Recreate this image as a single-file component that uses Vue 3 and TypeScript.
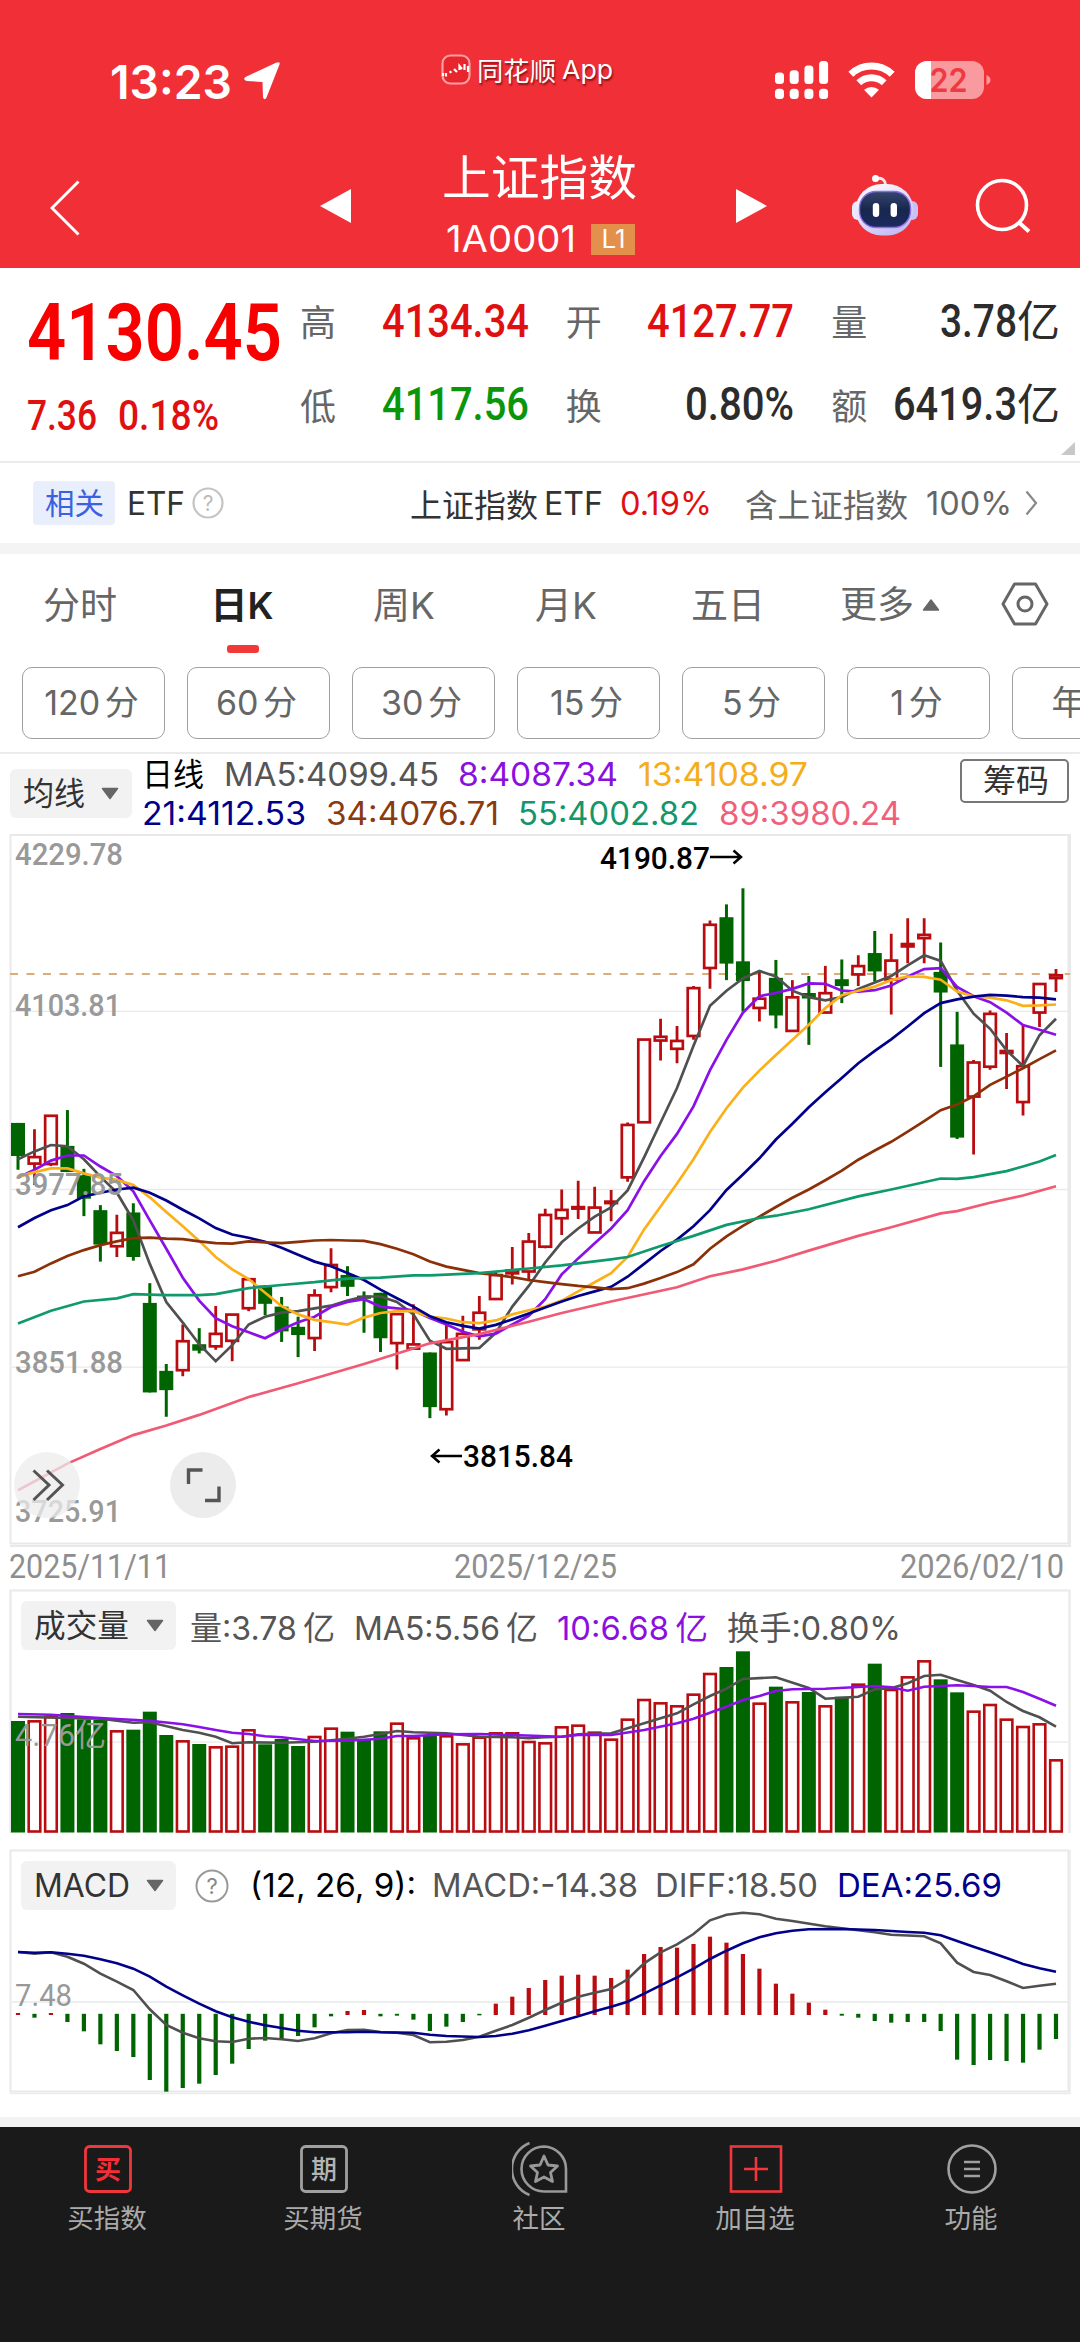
<script setup lang="ts">
import type { Directive } from 'vue'

type Pt = [number, number]
type Candle = [kind: 'r' | 'g', high: number, top: number, bottom: number, low: number]

/* Squeezes or stretches a text run so that it takes exactly the given width. */
const vFit: Directive<HTMLElement, number> = {
  mounted(el, { value }) {
    el.style.display = 'inline-block'
    el.style.whiteSpace = 'nowrap'
    const natural = el.getBoundingClientRect().width
    el.style.width = `${value}px`
    el.style.transformOrigin = '0 50%'
    el.style.transform = `scaleX(${value / natural})`
  },
}

const px = (i: number) => 18 + i * 16.476
const ky = (v: number) => 830 + v / 2.178
const vy = (v: number) => 1540 + v / 3
const my = (v: number) => 1840 + v / 3

const path = (pts: Pt[], fy: (v: number) => number) =>
  pts.map(([i, v]) => `${px(i).toFixed(1)},${fy(v).toFixed(1)}`).join(' ')
const full = (values: number[]): Pt[] => values.map((v, i) => [i, v])

const candles: Candle[] = [
  ['g', 638, 638, 710, 740], ['r', 652, 712, 727, 773], ['r', 622, 622, 728, 732], ['g', 610, 688, 745, 745],
  ['g', 738, 752, 803, 841], ['g', 817, 828, 903, 940], ['r', 838, 877, 907, 930], ['g', 813, 833, 930, 938],
  ['g', 987, 1030, 1225, 1225], ['g', 1163, 1178, 1220, 1278], ['r', 1077, 1113, 1177, 1190], ['g', 1085, 1120, 1134, 1140],
  ['r', 1037, 1097, 1125, 1132], ['r', 1055, 1055, 1113, 1157], ['r', 978, 978, 1042, 1048], ['g', 992, 992, 1032, 1057],
  ['g', 1017, 1038, 1092, 1115], ['g', 1060, 1082, 1100, 1148], ['r', 1000, 1013, 1107, 1135], ['r', 911, 947, 996, 1007],
  ['g', 950, 969, 995, 1015], ['g', 1005, 1014, 1021, 1095], ['g', 1008, 1008, 1107, 1137], ['r', 1052, 1054, 1118, 1175],
  ['r', 1033, 1120, 1130, 1132], ['g', 1138, 1138, 1257, 1281], ['r', 1077, 1115, 1262, 1275], ['r', 1058, 1097, 1155, 1155],
  ['r', 1015, 1051, 1088, 1110], ['r', 962, 969, 1022, 1022], ['r', 908, 959, 966, 990], ['r', 878, 896, 962, 983],
  ['r', 825, 838, 908, 911], ['r', 783, 827, 846, 882], ['r', 764, 821, 825, 847], ['r', 777, 822, 877, 877],
  ['r', 784, 809, 813, 852], ['r', 637, 642, 757, 766], ['r', 456, 456, 637, 637], ['r', 411, 450, 459, 502],
  ['r', 427, 459, 477, 508], ['r', 340, 344, 449, 457], ['r', 197, 206, 301, 346], ['g', 162, 190, 291, 327],
  ['g', 127, 286, 329, 395], ['r', 307, 367, 388, 417], ['g', 283, 322, 404, 432], ['r', 327, 364, 438, 438],
  ['g', 318, 355, 367, 468], ['r', 296, 355, 398, 398], ['g', 282, 325, 340, 377], ['r', 273, 296, 315, 340],
  ['g', 220, 268, 308, 330], ['r', 226, 284, 326, 402], ['r', 192, 248, 254, 290], ['r', 192, 228, 236, 290],
  ['g', 245, 309, 354, 516], ['g', 396, 467, 670, 673], ['r', 501, 506, 581, 707], ['r', 393, 400, 516, 522],
  ['r', 442, 481, 486, 564], ['r', 425, 514, 593, 622], ['r', 335, 335, 398, 429], ['r', 303, 316, 323, 353],
]

const ma5 = full([717, 700, 686, 689, 717, 755, 790, 850, 945, 1028, 1073, 1120, 1157, 1122, 1077, 1060, 1051, 1048, 1042, 1036, 1025, 1016, 1016, 1028, 1055, 1112, 1130, 1129, 1128, 1095, 1038, 993, 942, 898, 868, 842, 822, 785, 713, 637, 562, 470, 383, 350, 323, 307, 319, 350, 364, 371, 364, 346, 332, 318, 295, 273, 285, 350, 400, 433, 480, 514, 447, 411])
const ma8 = full([757, 740, 720, 709, 709, 733, 754, 787, 850, 912, 975, 1025, 1063, 1081, 1094, 1107, 1088, 1072, 1060, 1039, 1028, 1022, 1038, 1042, 1046, 1063, 1077, 1093, 1103, 1097, 1077, 1058, 1022, 968, 933, 900, 868, 828, 765, 710, 662, 602, 523, 457, 398, 362, 355, 346, 334, 335, 350, 352, 349, 339, 319, 303, 301, 342, 362, 375, 398, 425, 435, 446])
const ma13 = full([755, 745, 737, 737, 748, 757, 762, 773, 800, 832, 863, 895, 930, 957, 978, 1008, 1037, 1055, 1067, 1072, 1077, 1062, 1052, 1048, 1048, 1060, 1064, 1072, 1074, 1068, 1055, 1046, 1038, 1025, 1005, 985, 965, 930, 870, 820, 770, 717, 658, 606, 561, 524, 490, 457, 424, 388, 360, 350, 341, 327, 319, 320, 326, 352, 362, 365, 371, 383, 382, 380])
const ma21 = full([865, 845, 828, 817, 798, 790, 783, 779, 790, 807, 827, 846, 867, 881, 888, 897, 910, 925, 940, 950, 965, 980, 1001, 1020, 1038, 1059, 1072, 1080, 1086, 1078, 1066, 1053, 1040, 1027, 1015, 1005, 995, 973, 945, 917, 892, 863, 828, 784, 750, 715, 674, 640, 604, 571, 540, 508, 481, 456, 428, 399, 377, 369, 363, 359, 361, 364, 365, 369])
const ma34 = full([972, 962, 944, 928, 915, 904, 896, 889, 888, 890, 891, 896, 900, 901, 896, 898, 900, 897, 894, 893, 894, 895, 902, 912, 924, 940, 951, 958, 965, 969, 974, 980, 985, 989, 993, 996, 1000, 998, 988, 976, 963, 946, 912, 885, 862, 842, 821, 801, 783, 763, 742, 718, 698, 679, 657, 634, 610, 598, 580, 555, 537, 519, 499, 480])
const ma55: Pt[] = [[0, 1075], [2, 1047], [4, 1027], [6, 1020], [7, 1011], [9, 1013], [11, 1013], [12, 1011], [14, 998], [16, 991], [18, 985], [20, 977], [22, 975], [24, 970], [25, 970], [28, 965], [31, 955], [33, 948], [36, 935], [37, 930], [39, 906], [41, 884], [43, 860], [45, 845], [46, 840], [48, 826], [51, 798], [53, 783], [56, 759], [57, 760], [58, 756], [60, 743], [61, 733], [62, 722], [63, 708]]
const ma89: Pt[] = [[0, 1438], [3, 1380], [5, 1348], [7, 1318], [9, 1297], [11, 1274], [14, 1235], [17, 1205], [21, 1163], [25, 1118], [28, 1098], [31, 1071], [33, 1052], [36, 1027], [40, 996], [42, 972], [44, 957], [46, 938], [48, 916], [51, 884], [53, 865], [56, 835], [57, 830], [59, 812], [61, 796], [63, 776]]

const kLines = [
  { color: '#505050', pts: ma5 },
  { color: '#8a10e8', pts: ma8 },
  { color: '#fbb01a', pts: ma13 },
  { color: '#00008b', pts: ma21 },
  { color: '#8b3008', pts: ma34 },
  { color: '#0f9a6e', pts: ma55 },
  { color: '#f05a74', pts: ma89 },
]

const volume = [543, 541, 528, 519, 538, 540, 571, 569, 515, 585, 601, 612, 619, 617, 568, 613, 597, 618, 588, 563, 575, 600, 574, 548, 592, 588, 586, 610, 590, 577, 577, 603, 607, 559, 554, 575, 596, 536, 477, 487, 496, 461, 399, 381, 334, 488, 440, 484, 456, 496, 470, 431, 371, 447, 409, 361, 418, 457, 512, 492, 536, 558, 550, 658]
const volMa5: Pt[] = [[0, 530], [3, 534], [5, 536], [7, 548], [8, 547], [10, 570], [11, 578], [12, 590], [13, 610], [14, 607], [16, 608], [18, 605], [20, 596], [21, 590], [22, 582], [23, 573], [24, 577], [26, 580], [28, 590], [30, 592], [31, 595], [32, 592], [33, 590], [34, 583], [36, 580], [38, 550], [40, 520], [41, 493], [42, 468], [43, 446], [44, 417], [46, 412], [48, 444], [49, 476], [51, 470], [52, 448], [53, 445], [54, 430], [55, 408], [56, 404], [57, 420], [58, 435], [59, 452], [60, 486], [61, 513], [62, 532], [63, 560]]
const volMa10: Pt[] = [[0, 522], [2, 524], [4, 531], [6, 537], [8, 542], [10, 553], [11, 561], [12, 570], [13, 578], [14, 582], [15, 589], [16, 592], [18, 603], [20, 602], [22, 596], [23, 588], [24, 588], [26, 583], [28, 582], [30, 585], [33, 590], [34, 585], [36, 585], [38, 570], [40, 550], [41, 536], [42, 518], [43, 500], [44, 480], [45, 468], [46, 453], [47, 448], [49, 446], [51, 441], [52, 438], [53, 442], [54, 452], [55, 440], [57, 436], [58, 438], [59, 441], [60, 441], [61, 456], [62, 476], [63, 497]]

const macd = [519, 533, 519, 546, 574, 613, 633, 651, 720, 755, 744, 731, 705, 671, 627, 602, 600, 588, 562, 529, 513, 510, 529, 527, 539, 573, 560, 546, 526, 491, 470, 444, 420, 407, 404, 407, 414, 389, 342, 321, 323, 312, 290, 308, 342, 386, 431, 461, 488, 509, 527, 533, 543, 548, 546, 546, 573, 659, 675, 660, 663, 668, 629, 597]
const diff: Pt[] = [[0, 336], [1, 341], [2, 337], [3, 350], [4, 371], [5, 401], [6, 425], [7, 450], [8, 508], [9, 555], [10, 578], [11, 595], [12, 604], [13, 606], [14, 596], [15, 594], [16, 598], [17, 603], [18, 595], [19, 580], [20, 570], [21, 569], [22, 576], [23, 578], [24, 585], [25, 607], [26, 605], [27, 600], [28, 590], [29, 572], [30, 555], [31, 533], [32, 510], [33, 488], [34, 470], [35, 458], [36, 447], [37, 418], [38, 370], [39, 337], [40, 313], [41, 282], [42, 241], [43, 224], [44, 218], [45, 223], [46, 236], [47, 243], [49, 259], [51, 271], [52, 277], [53, 284], [55, 289], [56, 310], [57, 368], [58, 396], [59, 405], [60, 424], [61, 444], [62, 437], [63, 431]]
const dea: Pt[] = [[0, 336], [1, 338], [2, 337], [3, 341], [4, 347], [5, 358], [6, 370], [7, 386], [8, 410], [9, 440], [10, 466], [11, 491], [12, 514], [13, 532], [14, 545], [15, 556], [16, 564], [17, 572], [18, 577], [20, 577], [21, 575], [22, 577], [24, 578], [25, 584], [26, 588], [28, 591], [29, 588], [30, 581], [31, 571], [32, 557], [33, 543], [34, 529], [35, 514], [36, 500], [37, 485], [38, 461], [39, 436], [40, 412], [41, 386], [42, 357], [43, 332], [44, 310], [45, 292], [46, 280], [47, 272], [48, 268], [50, 267], [52, 270], [54, 276], [55, 278], [56, 286], [57, 303], [58, 320], [59, 337], [60, 354], [61, 372], [62, 385], [63, 395]]

const priceLabels = [
  { text: '4229.78', y: 865, w: 108 },
  { text: '4103.81', y: 1016, w: 106 },
  { text: '3977.85', y: 1195, w: 108 },
  { text: '3851.88', y: 1373, w: 108 },
  { text: '3725.91', y: 1522, w: 106 },
]

const stats = [
  [
    { name: '高', value: '4134.34', tone: 'up', w: 147 },
    { name: '开', value: '4127.77', tone: 'up', w: 147 },
    { name: '量', value: '3.78', unit: '亿', tone: '', w: 77 },
  ],
  [
    { name: '低', value: '4117.56', tone: 'down', w: 147 },
    { name: '换', value: '0.80%', tone: '', w: 109 },
    { name: '额', value: '6419.3', unit: '亿', tone: '', w: 124 },
  ],
]

const tabs = ['分时', '日K', '周K', '月K', '五日']
const periods = ['120 分', '60 分', '30 分', '15 分', '5 分', '1 分', '年']
const signal = [[84, 72.6], [84, 70.3], [84, 65.5], [84, 61]]
</script>

<template>
  <div class="screen">
    <header class="top">
      <div class="status">
        <div class="clock">
          <span v-fit="122" class="time">13:23</span>
          <svg class="loc" width="38" height="38" viewBox="0 0 38 38"><path d="M36.500 2.500 L23.500 35.500 Q21.500 39 20 35.500 L19.500 20 L3.500 19 Q-.5 17.500 2.500 15 L33 .8 Q37.500 -1 36.500 2.500Z" fill="#fff" /></svg>
        </div>
        <div class="source">
          <svg width="30" height="31" viewBox="0 0 30 31">
            <rect x="1.500" y="1.500" width="27" height="28" rx="8" fill="#e8242c" stroke="#f9a0a2" stroke-width="2.200" />
            <path d="M2 19 V22 M5 19 V22.500 M9 17 L10 19 M13 15 L16 18 M18.500 16 V12 L21 15 M23.500 10 V16 M27 12 V18" stroke="#fff" stroke-width="2.200" fill="none" />
          </svg>
          <span v-fit="79">同花顺</span><span v-fit="51" class="app">App</span>
        </div>
        <div class="system">
          <svg width="220" height="42" viewBox="772 59 220 42">
            <g fill="#fff">
              <template v-for="(s, i) in signal" :key="i">
                <rect :x="775 + i * 14.7" :y="s[1]" width="9" :height="s[0] - s[1]" rx="3.500" />
                <rect :x="775 + i * 14.7" y="88.800" width="9" height="10.200" rx="3.500" />
              </template>
            </g>
            <g fill="none" stroke="#fff">
              <path d="M850.800 74.200 A30 30 0 0 1 892.200 74.200" stroke-width="7" />
              <path d="M858.800 82.800 A18.500 18.500 0 0 1 884.200 82.800" stroke-width="7" />
            </g>
            <path d="M871.500 97.500 L864 89.800 Q871.500 84 879 89.800Z" fill="#fff" />
            <rect x="915" y="61" width="69" height="38" rx="12" fill="#f99b9e" />
            <path d="M931 61 H927 A12 12 0 0 0 915 73 V87 A12 12 0 0 0 927 99 H931Z" fill="#fff" />
            <path d="M986.500 75 Q990.500 77 990.500 80 T986.500 85Z" fill="#f99b9e" />
            <text x="929.500" y="92" font-family="Inter" font-weight="600" font-size="32" textLength="38" lengthAdjust="spacingAndGlyphs" fill="#ee3a42">22</text>
          </svg>
        </div>
      </div>
      <div class="nav">
        <svg class="back" width="30" height="56" viewBox="0 0 30 56"><path d="M28.500 1.500 L2 28 L28.500 54.500" fill="none" stroke="#fff" stroke-width="3" /></svg>
        <svg class="prev" width="31" height="34" viewBox="0 0 31 34"><path d="M31 0 V34 L0 17Z" fill="#fff" /></svg>
        <div class="titles">
          <div class="name"><span v-fit="195">上证指数</span></div>
          <div class="code"><span v-fit="130">1A0001</span><b><span v-fit="24">L1</span></b></div>
        </div>
        <svg class="next" width="31" height="34" viewBox="0 0 31 34"><path d="M0 0 V34 L31 17Z" fill="#fff" /></svg>
        <svg class="robot" width="66" height="62" viewBox="852 174 66 62">
          <defs>
            <linearGradient id="shell" x1="0" y1="0" x2=".6" y2="1"><stop offset="0" stop-color="#fff" /><stop offset=".55" stop-color="#e4defa" /><stop offset="1" stop-color="#c5bdf4" /></linearGradient>
            <linearGradient id="visor" x1="0" y1="0" x2="0" y2="1"><stop offset="0" stop-color="#35466e" /><stop offset=".5" stop-color="#18274e" /><stop offset="1" stop-color="#1c2a5e" /></linearGradient>
          </defs>
          <path d="M876 178.500 Q885 177 885.500 185" fill="none" stroke="#f6e6ee" stroke-width="2.800" />
          <circle cx="875.500" cy="178.500" r="3.500" fill="#fff" />
          <rect x="852" y="201" width="12" height="19" rx="6" fill="#eae8fb" />
          <rect x="906" y="201" width="12" height="19" rx="6" fill="#c9c0f6" />
          <rect x="855.500" y="184" width="58" height="51.500" rx="26" fill="url(#shell)" />
          <rect x="859.500" y="191.500" width="51" height="36" rx="16.500" fill="url(#visor)" stroke="#8a6fe8" stroke-width="1.400" />
          <rect x="872.800" y="203" width="6.400" height="14" rx="3.200" fill="#fff" />
          <rect x="890.600" y="203" width="6.400" height="14" rx="3.200" fill="#fff" />
        </svg>
        <svg class="search" width="56" height="56" viewBox="975 179 56 56"><circle cx="1002" cy="206" r="24.500" fill="none" stroke="#fff" stroke-width="3.600" /><path d="M1019 223.500 L1029 232.500" stroke="#fff" stroke-width="4" /></svg>
      </div>
    </header>

    <section class="quote">
      <div class="last">
        <div class="price"><span v-fit="255">4130.45</span></div>
        <div class="change"><span v-fit="70">7.36</span><span v-fit="101">0.18%</span></div>
      </div>
      <div class="stats">
        <div v-for="(row, r) in stats" :key="r" class="stat-row">
          <div v-for="s in row" :key="s.name" class="stat">
            <span class="label">{{ s.name }}</span>
            <span class="value" :class="s.tone"><span v-fit="s.w">{{ s.value }}</span><span v-if="s.unit" class="unit">{{ s.unit }}</span></span>
          </div>
        </div>
      </div>
      <i class="corner"></i>
    </section>

    <section class="etf">
      <span class="tag"><span v-fit="59">相关</span></span>
      <span v-fit="58" class="etf-name">ETF</span>
      <svg class="help" width="32" height="32" viewBox="0 0 32 32"><circle cx="16" cy="16" r="14.500" fill="none" stroke="#c4c4c4" stroke-width="2.200" /><text x="16" y="23.500" text-anchor="middle" font-family="Inter" font-size="21" fill="#bbb">?</text></svg>
      <span class="spacer"></span>
      <span v-fit="128">上证指数</span>
      <span v-fit="59" class="etf-suffix">ETF</span>
      <span v-fit="92" class="etf-rate">0.19%</span>
      <span v-fit="163" class="etf-inc">含上证指数</span>
      <span v-fit="86" class="etf-pct">100%</span>
      <svg width="13" height="26" viewBox="0 0 13 26"><path d="M1.500 1.500 L11 13 L1.500 24.500" fill="none" stroke="#888" stroke-width="2.200" /></svg>
    </section>

    <section class="tabs">
      <div v-for="t in tabs" :key="t" class="tab" :class="{ on: t === '日K' }"><span>{{ t }}</span></div>
      <div class="tab more"><span>更多</span><svg width="18" height="12" viewBox="0 0 18 12"><path d="M9 1 L16.500 11 H1.500Z" fill="#666" stroke="#666" stroke-width="1.500" stroke-linejoin="round" /></svg></div>
      <div class="gear"><svg width="48" height="44" viewBox="0 0 48 44"><path d="M13.500 2 H34.500 L46 22 L34.500 42 H13.500 L2 22Z" fill="none" stroke="#666" stroke-width="3" stroke-linejoin="round" /><circle cx="24" cy="22" r="7" fill="none" stroke="#666" stroke-width="3" /></svg></div>
    </section>

    <section class="periods">
      <div v-for="p in periods" :key="p" class="period">{{ p }}</div>
    </section>

    <section class="ma">
      <div class="picker small"><span v-fit="62">均线</span><svg width="18" height="13" viewBox="0 0 18 13"><path d="M1.500 1.500 H16.500 L9 11.500Z" fill="#666" stroke="#666" stroke-width="1.500" stroke-linejoin="round" /></svg></div>
      <div class="ma-values">
        <div><span v-fit="62" class="k">日线</span><span v-fit="215" class="c5">MA5:4099.45</span><span v-fit="160" class="c8">8:4087.34</span><span v-fit="170" class="c13">13:4108.97</span></div>
        <div><span v-fit="164" class="c21">21:4112.53</span><span v-fit="173" class="c34">34:4076.71</span><span v-fit="181" class="c55">55:4002.82</span><span v-fit="182" class="c89">89:3980.24</span></div>
      </div>
      <div class="chips"><span v-fit="66">筹码</span></div>
    </section>

    <svg class="chart" width="1080" height="713" viewBox="0 834 1080 713">
      <g stroke="#e9e9e9" fill="none">
        <rect x="10.500" y="835" width="1058" height="708.500" stroke-width="2" />
        <path d="M10 1546 H1070 V834" stroke-width="2" />
        <path d="M12 1011.400 H1068 M12 1189.500 H1068 M12 1367.200 H1068" stroke-width="1.300" />
      </g>
      <path d="M10 974 H1070" stroke="#d9ae78" stroke-width="1.800" stroke-dasharray="8 8.480" />
      <g v-for="(c, i) in candles" :key="i">
        <template v-if="c[0] === 'g'">
          <path :d="`M${px(i)} ${ky(c[1])} V${ky(c[4])}`" stroke="#006400" stroke-width="3" />
          <rect :x="px(i) - 7" :y="ky(c[2])" width="14" :height="ky(c[3]) - ky(c[2])" fill="#006400" />
        </template>
        <template v-else>
          <path :d="`M${px(i)} ${ky(c[1])} V${ky(c[2])} M${px(i)} ${ky(c[3])} V${ky(c[4])}`" stroke="#b80c10" stroke-width="2.800" />
          <rect :x="px(i) - 5.800" :y="ky(c[2]) + .2" width="11.600" :height="Math.max(ky(c[3]) - ky(c[2]) - .4, .5)" fill="none" stroke="#b80c10" stroke-width="2.700" />
        </template>
      </g>
      <polyline v-for="l in kLines" :key="l.color" :points="path(l.pts, ky)" :stroke="l.color" fill="none" stroke-width="2.700" />
      <g class="axis"><text v-for="l in priceLabels" :key="l.text" x="15" :y="l.y" :textLength="l.w" lengthAdjust="spacingAndGlyphs">{{ l.text }}</text></g>
      <g class="peak">
        <text x="600" y="868.500" textLength="110" lengthAdjust="spacingAndGlyphs">4190.87</text>
        <text x="463" y="1467" textLength="110" lengthAdjust="spacingAndGlyphs">3815.84</text>
        <path d="M710 857 H741 M733.500 850.500 L741 857 L733.500 863.500 M462 1456 H432 M439.500 1449.500 L432 1456 L439.500 1462.500" fill="none" stroke="#000" stroke-width="2.500" />
      </g>
      <circle cx="47" cy="1485" r="33" fill="#ececec" fill-opacity=".75" />
      <path d="M33.500 1470.500 L49 1485 L33.500 1500 M47 1470.500 L62.500 1485 L47 1500" fill="none" stroke="#555" stroke-width="3" />
      <circle cx="203" cy="1485" r="33" fill="#ececec" />
      <path d="M188.500 1484 V1470 H202.500 M219 1486.500 V1500.500 H205" fill="none" stroke="#555" stroke-width="3.400" />
    </svg>

    <div class="dates"><span v-fit="162">2025/11/11</span><span v-fit="163">2025/12/25</span><span v-fit="164">2026/02/10</span></div>

    <section class="panel">
      <svg class="chart" width="1080" height="246" viewBox="0 1589 1080 246">
        <path d="M10.500 1833 V1590.500 H1069.500 V1833" fill="none" stroke="#e9e9e9" stroke-width="2.200" />
        <path d="M12 1742 H1068" stroke="#ececec" stroke-width="1.500" />
        <g v-for="(v, i) in volume" :key="i">
          <rect v-if="candles[i][0] === 'g'" :x="px(i) - 7" :y="vy(v)" width="14" :height="1832.5 - vy(v)" fill="#006400" />
          <rect v-else :x="px(i) - 5.800" :y="vy(v) + 1" width="11.600" :height="1830.500 - vy(v)" fill="none" stroke="#b80c10" stroke-width="2.600" />
        </g>
        <polyline :points="path(volMa5, vy)" fill="none" stroke="#505050" stroke-width="2.600" />
        <polyline :points="path(volMa10, vy)" fill="none" stroke="#8a10e8" stroke-width="2.600" />
        <g class="axis thin"><text x="15" y="1746" textLength="91" lengthAdjust="spacingAndGlyphs">4.76亿</text></g>
      </svg>
      <div class="legend">
        <div class="picker"><span v-fit="95">成交量</span><svg width="18" height="13" viewBox="0 0 18 13"><path d="M1.500 1.500 H16.500 L9 11.500Z" fill="#666" stroke="#666" stroke-width="1.500" stroke-linejoin="round" /></svg></div>
        <span v-fit="145" class="c5 first">量:3.78 亿</span><span v-fit="184" class="c5">MA5:5.56 亿</span><span v-fit="151" class="c8">10:6.68 亿</span><span v-fit="174" class="c5">换手:0.80%</span>
      </div>
    </section>

    <section class="panel last-panel">
      <svg class="chart" width="1080" height="246" viewBox="0 1849 1080 246">
        <rect x="10.500" y="1850.500" width="1058" height="241" fill="none" stroke="#e9e9e9" stroke-width="2" />
        <path d="M10 2093.500 H1070 V1850" fill="none" stroke="#ececec" stroke-width="1.600" />
        <path d="M12 2002 H1068" stroke="#e9e9e9" stroke-width="1.500" />
        <g class="axis thin"><text x="15" y="2006" textLength="57" lengthAdjust="spacingAndGlyphs">7.48</text></g>
        <path v-for="(v, i) in macd" :key="i" :d="`M${px(i)} ${v < 523 ? 2015 : 2013.800} V${my(v)}`" :stroke="v < 523 ? '#b80c10' : '#006400'" stroke-width="4.200" />
        <polyline :points="path(diff, my)" fill="none" stroke="#505050" stroke-width="2.600" />
        <polyline :points="path(dea, my)" fill="none" stroke="#00008b" stroke-width="2.600" />
      </svg>
      <div class="legend">
        <div class="picker"><span v-fit="96">MACD</span><svg width="18" height="13" viewBox="0 0 18 13"><path d="M1.500 1.500 H16.500 L9 11.500Z" fill="#666" stroke="#666" stroke-width="1.500" stroke-linejoin="round" /></svg></div>
        <svg class="q" width="34" height="34" viewBox="0 0 34 34"><circle cx="17" cy="17" r="15.500" fill="none" stroke="#999" stroke-width="2" /><text x="17" y="25" text-anchor="middle" font-family="Inter" font-size="22" fill="#888">?</text></svg>
        <span v-fit="166" class="k args">(12, 26, 9):</span><span v-fit="206" class="c5 macd">MACD:-14.38</span><span v-fit="163" class="c5 diff">DIFF:18.50</span><span v-fit="165" class="c21 dea">DEA:25.69</span>
      </div>
    </section>

    <div class="band"></div>

    <footer class="bar">
      <div class="item">
        <svg width="56" height="58" viewBox="0 0 56 58"><rect x="5.500" y="6.500" width="45" height="45" rx="4" fill="none" stroke="#f1363c" stroke-width="2.800" /><text x="28" y="38.800" text-anchor="middle" font-family="Noto Sans CJK SC" font-weight="700" font-size="26" fill="#f12f37">买</text></svg>
        <span>买指数</span>
      </div>
      <div class="item">
        <svg width="56" height="58" viewBox="0 0 56 58"><rect x="5.500" y="6.500" width="45" height="45" rx="4" fill="none" stroke="#a0a0a0" stroke-width="2.800" /><text x="28" y="38.500" text-anchor="middle" font-family="Noto Sans CJK SC" font-weight="500" font-size="26" fill="#b4b4b4">期</text></svg>
        <span>买期货</span>
      </div>
      <div class="item">
        <svg width="56" height="58" viewBox="0 0 56 58"><path d="M32 6.500 A22.500 22.500 0 0 0 32 51.500 H54 V29 A22.500 22.500 0 0 0 32 6.500Z M17.500 3 A28 28 0 0 0 17.500 55" fill="none" stroke="#999" stroke-width="2.600" /><path d="M32 16 L36 25 L45.500 26 L38.500 32.500 L40.500 41.500 L32 37 L23.500 41.500 L25.500 32.500 L18.500 26 L28 25Z" fill="none" stroke="#999" stroke-width="2.800" stroke-linejoin="round" /></svg>
        <span>社区</span>
      </div>
      <div class="item">
        <svg width="56" height="58" viewBox="0 0 56 58"><rect x="3" y="6.500" width="50" height="45" fill="none" stroke="#f1363c" stroke-width="2.600" /><path d="M16 29 H40 M28 17 V41" stroke="#f1363c" stroke-width="2.600" /></svg>
        <span>加自选</span>
      </div>
      <div class="item">
        <svg width="56" height="58" viewBox="0 0 56 58"><circle cx="28" cy="29" r="23.500" fill="none" stroke="#a0a0a0" stroke-width="2.600" /><path d="M20 22 H36 M20 29 H36 M20 36 H36" stroke="#a0a0a0" stroke-width="2.600" /></svg>
        <span>功能</span>
      </div>
    </footer>
  </div>
</template>

<style>
body {
  margin: 0;
  background: #fff;
}
</style>

<style scoped>
.screen {
  width: 1080px;
  height: 2342px;
  display: flex;
  flex-direction: column;
  overflow: hidden;
  background: #fff;
  font-family: Inter, 'Noto Sans CJK SC', sans-serif;
  color: #333;
}
.screen > * {
  flex: none;
}
svg {
  display: block;
  flex: none;
}
.top {
  height: 268px;
  background: #f12f37;
  color: #fff;
}
.status {
  height: 140px;
  box-sizing: border-box;
  padding: 50px 88px 0 110px;
  display: flex;
  align-items: flex-start;
}
.clock {
  width: 331px;
  height: 62px;
  display: flex;
  align-items: center;
  gap: 11px;
}
.time {
  font-size: 47px;
  font-weight: 600;
}
.source {
  height: 38px;
  display: flex;
  align-items: center;
  font-size: 26px;
  gap: 6px;
  text-shadow: 1px 2px 2px rgba(90, 0, 0, 0.7);
}
.system {
  margin-left: auto;
  margin-top: 9px;
}
.nav {
  display: flex;
  align-items: flex-start;
  padding-left: 50px;
}
.back {
  margin-top: 40px;
}
.prev {
  margin: 49px 0 0 240px;
}
.titles {
  width: 193px;
  margin-left: 92px;
}
.name {
  height: 72px;
  line-height: 72px;
  margin: 2px 0 0 -1px;
  font-size: 48px;
}
.code {
  display: flex;
  align-items: center;
  height: 44px;
  margin-top: 3px;
  margin-left: 3px;
  font-size: 37px;
  line-height: 44px;
}
.code b {
  width: 44px;
  height: 31px;
  margin-left: 15px;
  line-height: 31px;
  font-size: 25px;
  font-weight: 400;
  text-align: center;
  background: #e2904c;
}
.next {
  margin: 49px 0 0 100px;
}
.robot {
  margin: 34px 0 0 85px;
}
.search {
  margin: 38px 0 0 57px;
}
.quote {
  position: relative;
  height: 195px;
  box-sizing: border-box;
  border-bottom: 2px solid #ebebeb;
  display: flex;
  padding: 0 20px 0 27px;
}
.last {
  width: 273px;
  padding-top: 10px;
  color: #f80000;
  font-family: Roboto, sans-serif;
  font-weight: 500;
}
.price {
  height: 111px;
  line-height: 111px;
  font-size: 80px;
  font-weight: 600;
}
.change {
  display: flex;
  gap: 21px;
  height: 54px;
  line-height: 54px;
  font-size: 42px;
  color: #e01010;
}
.stats {
  flex: 1;
  padding-top: 12px;
}
.stat-row {
  display: flex;
  gap: 37px;
  height: 83.5px;
}
.stat {
  flex: 1;
  display: flex;
  justify-content: space-between;
  align-items: center;
}
.label {
  font-size: 36px;
  color: #666;
  line-height: 50px;
  margin-top: 3px;
}
.value {
  display: flex;
  align-items: center;
  font-family: Roboto, 'Noto Sans CJK SC', sans-serif;
  font-weight: 500;
  font-size: 45.5px;
  line-height: 60px;
  color: #2c2c2c;
}
.value.up {
  color: #e01010;
}
.value.down {
  color: #0a960a;
}
.unit {
  font-size: 43px;
  font-weight: 400;
}
.corner {
  position: absolute;
  right: 5px;
  bottom: 6px;
  border-left: 14px solid transparent;
  border-bottom: 13px solid #c8c8c8;
}
.etf {
  height: 80px;
  display: flex;
  align-items: center;
  padding: 0 42px 0 33px;
  font-size: 32px;
}
.tag {
  width: 82px;
  height: 44px;
  line-height: 44px;
  border-radius: 4px;
  background: #e8eefb;
  color: #3a62e0;
  text-align: center;
  font-size: 30px;
}
.etf-name {
  margin-left: 12px;
}
.help {
  margin-left: 7px;
}
.spacer {
  flex: 1;
}
.etf-suffix {
  margin-left: 6px;
}
.etf-rate {
  margin-left: 17px;
  color: #e01010;
}
.etf-inc {
  margin-left: 33px;
  color: #666;
}
.etf-pct {
  margin: 0 13px 0 18px;
  color: #666;
}
.tabs {
  height: 112px;
  box-sizing: border-box;
  border-top: 11px solid #f4f4f4;
  display: flex;
  font-size: 37px;
  color: #666;
}
.tab {
  width: 162px;
  height: 101px;
  line-height: 103px;
  text-align: center;
  position: relative;
}
.tab > span {
  margin-left: -2px;
}
.tab.on {
  color: #222;
  font-weight: 600;
}
.tab.on::after {
  content: '';
  position: absolute;
  left: 65px;
  top: 91px;
  width: 32px;
  height: 8px;
  border-radius: 3px;
  background: #f13a38;
}
.more {
  display: flex;
  align-items: center;
  justify-content: center;
  gap: 8px;
}
.gear {
  width: 106px;
  height: 99px;
  display: flex;
  align-items: center;
  justify-content: center;
}
.periods {
  height: 99px;
  box-sizing: border-box;
  border-bottom: 2px solid #ebebeb;
  padding: 12px 0 0 22px;
  display: flex;
  gap: 22px;
  overflow: hidden;
}
.period {
  flex: none;
  box-sizing: border-box;
  width: 143px;
  height: 72px;
  padding-right: 4px;
  line-height: 70px;
  border: 1.5px solid #a0a0a0;
  border-radius: 10px;
  text-align: center;
  font-size: 34px;
  word-spacing: -5px;
  color: #666;
}
.period:last-child {
  padding-right: 30px;
}
.ma {
  height: 80px;
  display: flex;
  align-items: flex-start;
  padding: 0 11px 0 10px;
}
.picker {
  box-sizing: border-box;
  width: 155px;
  height: 49px;
  padding: 0 12px 0 13px;
  border-radius: 6px;
  background: #f2f2f2;
  display: flex;
  align-items: center;
  justify-content: space-between;
  font-size: 32px;
  line-height: 49px;
}
.picker.small {
  width: 122px;
  margin-top: 15px;
  padding: 0 13px 0 13px;
}
.ma-values {
  margin-left: 10px;
  font-size: 32px;
}
.ma-values > div {
  display: flex;
  gap: 19.5px;
  height: 39px;
  line-height: 41px;
}
.chips {
  box-sizing: border-box;
  width: 109px;
  height: 44px;
  margin: 5px 0 0 auto;
  border: 2px solid #777;
  border-radius: 5px;
  line-height: 40px;
  text-align: center;
  font-size: 32px;
}
.k {
  color: #000;
}
.c5 {
  color: #555;
}
.c8 {
  color: #8a10e0;
}
.c13 {
  color: #f5ad1a;
}
.c21 {
  color: #00008b;
}
.c34 {
  color: #8b3a10;
}
.c55 {
  color: #14966a;
}
.c89 {
  color: #f0607a;
}
.axis {
  font-family: Roboto, 'Noto Sans CJK SC', sans-serif;
  font-size: 31px;
  font-weight: 500;
  fill: #999;
}
.axis.thin {
  font-weight: 400;
}
.peak {
  font-family: Roboto, sans-serif;
  font-size: 31px;
  font-weight: 500;
  fill: #000;
}
.dates {
  height: 42px;
  line-height: 40px;
  display: flex;
  justify-content: space-between;
  padding: 0 16px 0 9px;
  font-family: Roboto, sans-serif;
  font-size: 33.5px;
  color: #8e8e8e;
}
.panel {
  display: grid;
  height: 260px;
}
.panel > * {
  grid-area: 1 / 1;
}
.last-panel {
  height: 268px;
}
.legend {
  height: 49px;
  margin: 12px 0 0 21px;
  display: flex;
  align-items: center;
  gap: 19px;
  font-size: 32.5px;
  word-spacing: -3px;
}
.first {
  margin-left: -5px;
}
.args {
  margin-left: 2px;
  word-spacing: 0;
}
.macd {
  margin-left: -3px;
}
.diff {
  margin-left: -2px;
}
.band {
  height: 10px;
  background: #f3f3f3;
}
.bar {
  height: 215px;
  background: #1a1a1a;
  display: flex;
}
.item {
  width: 216px;
  padding-top: 13px;
  display: flex;
  flex-direction: column;
  align-items: center;
  font-size: 26.5px;
  line-height: 40px;
  color: #aaa;
}
.item > span {
  margin-left: -2px;
}
</style>
